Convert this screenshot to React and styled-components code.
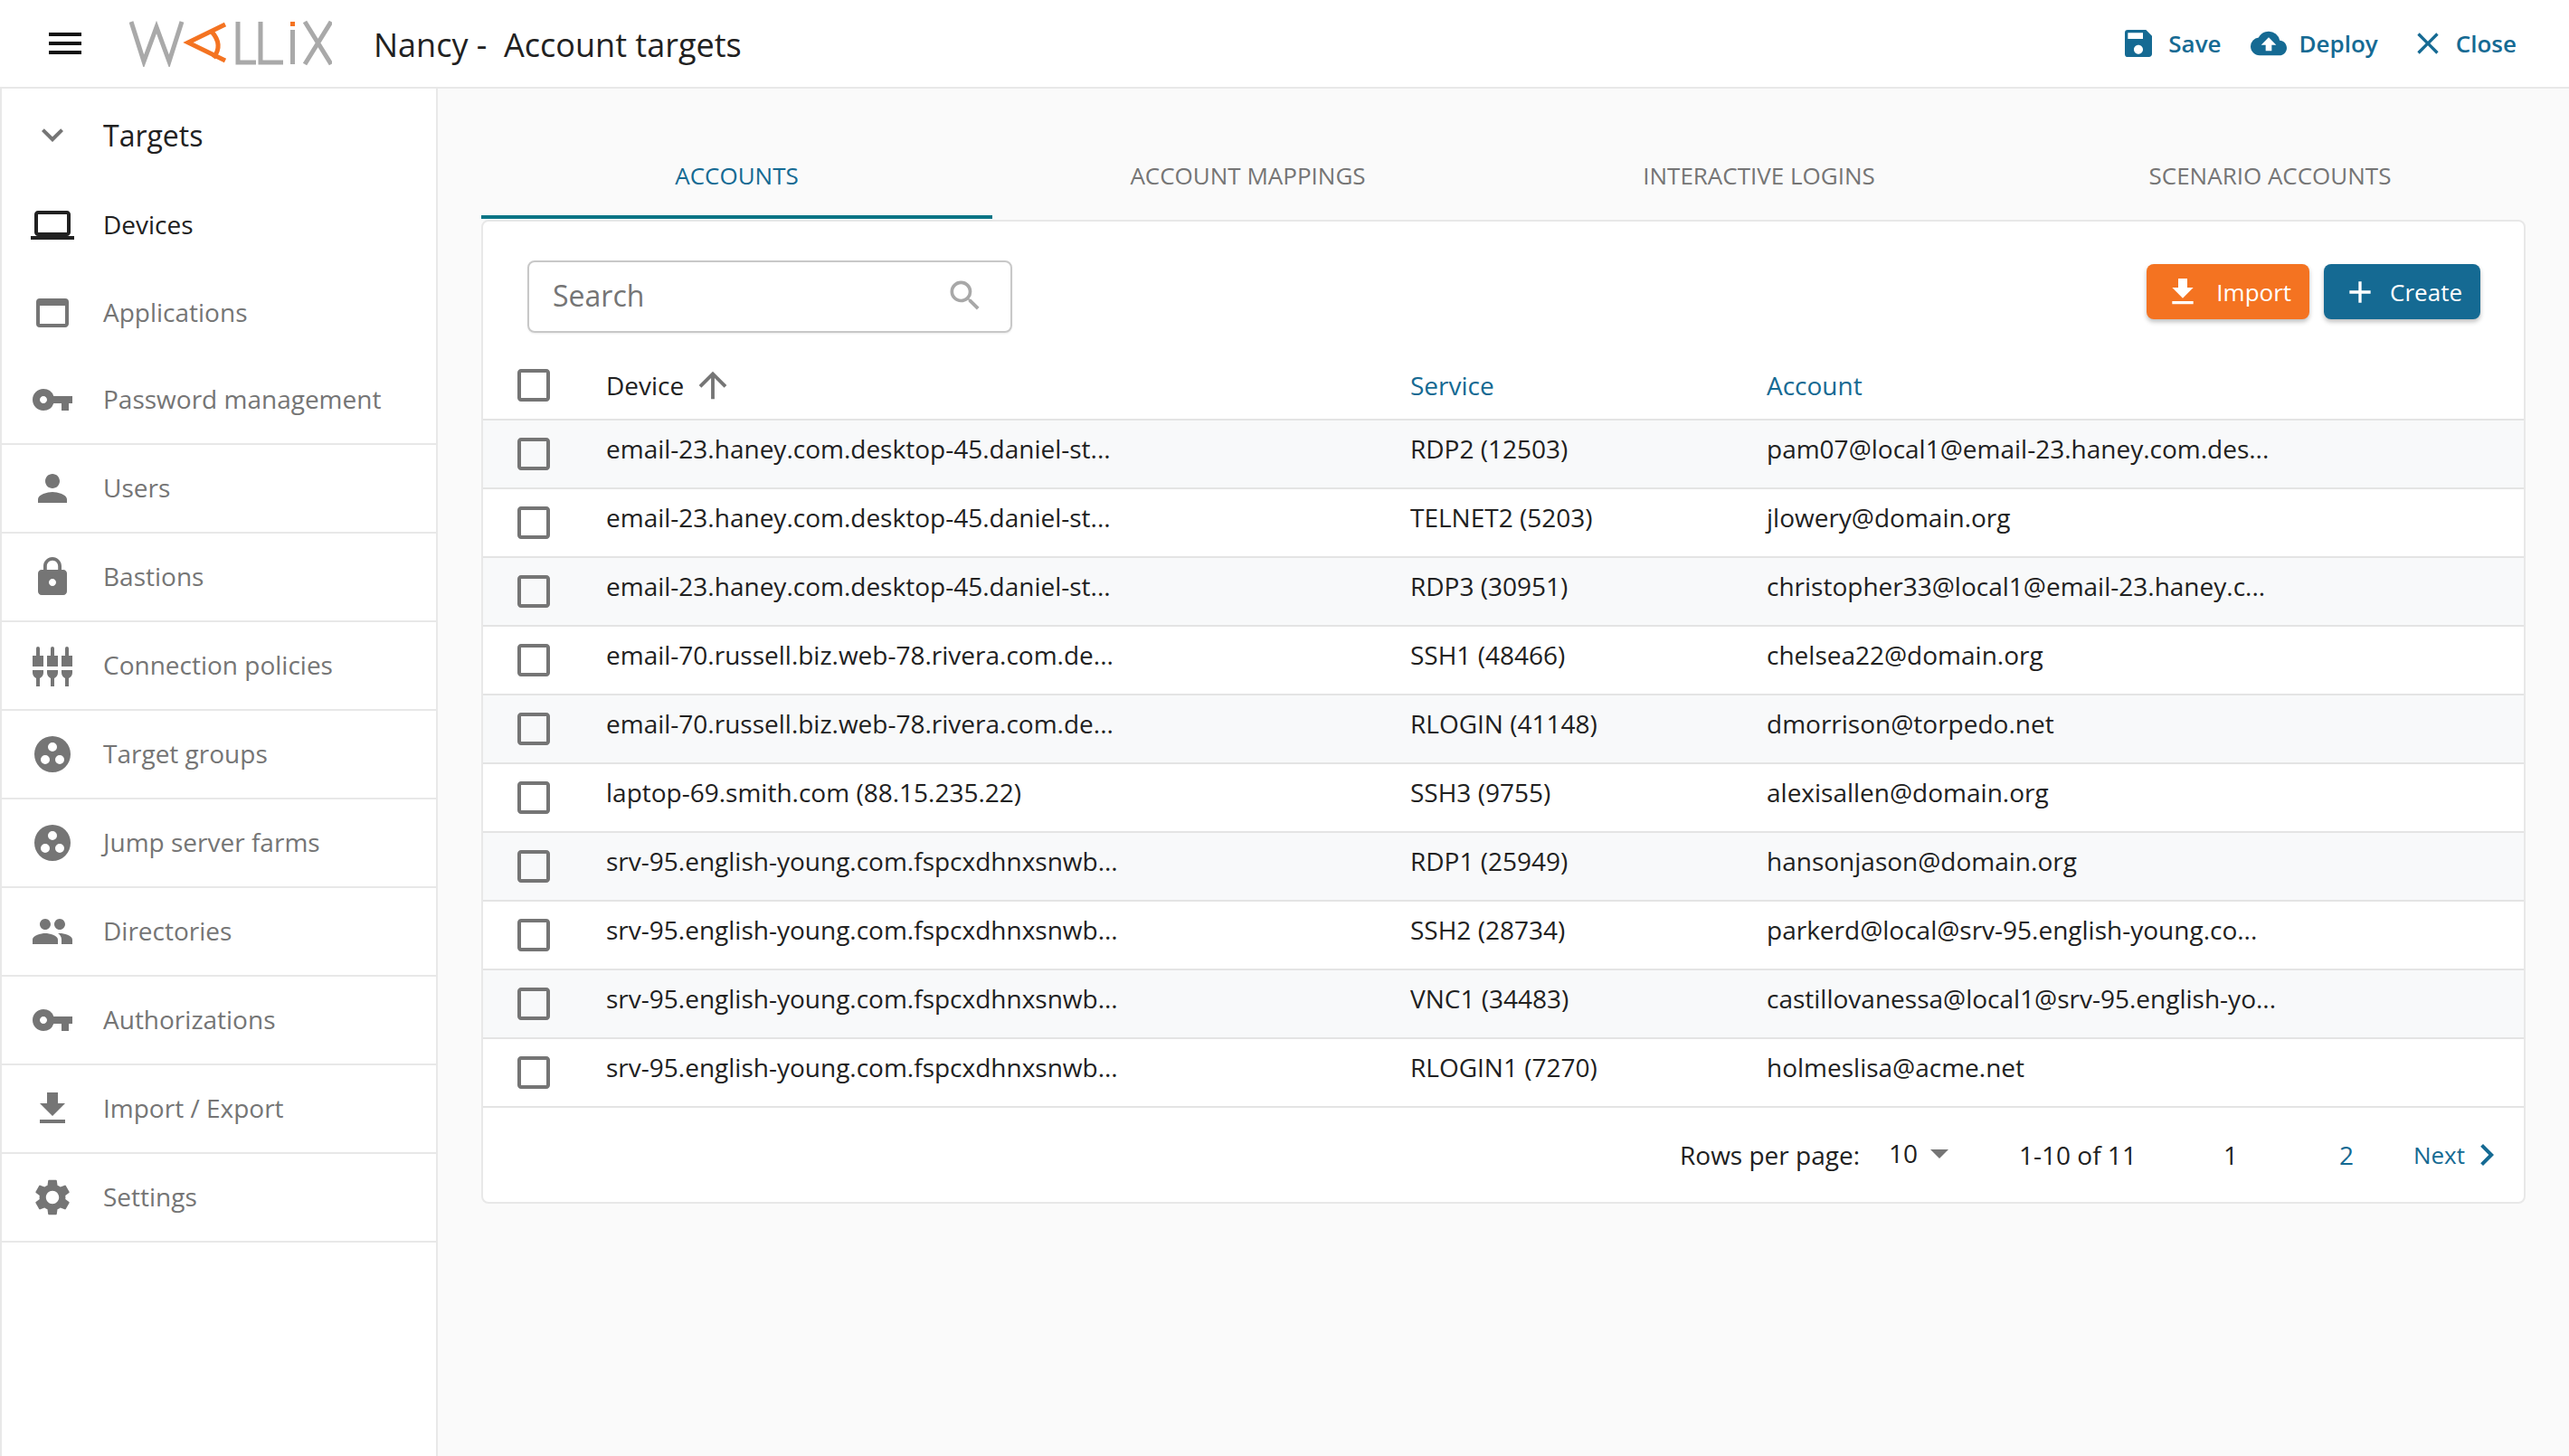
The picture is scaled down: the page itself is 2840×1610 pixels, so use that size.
import React from "react";
import styled, { createGlobalStyle } from "styled-components";
import {
  MdMenu, MdSave, MdCloudUpload, MdClose, MdExpandMore, MdLaptop, MdWebAsset, MdVpnKey, MdPerson, MdLock,
  MdPeople, MdFileDownload, MdSettings, MdSearch, MdAdd, MdCheckBoxOutlineBlank, MdArrowUpward, MdArrowDropDown, MdChevronRight,
} from "react-icons/md";

const Global = createGlobalStyle`
  html, body { margin: 0; padding: 0; background: #fafafa; }
  body { font-family: "Open Sans", "Noto Sans", sans-serif; color: #212121; }
  * { box-sizing: border-box; }
`;

const Page = styled.div`
  width: 2840px; height: 1610px; display: flex; flex-direction: column; overflow: hidden;
`;
const Header = styled.header`
  height: 98px; flex: none; display: flex; align-items: center; background: #fff;
  border-bottom: 2px solid #e8e8e8; padding: 0 58px 0 48px;
`;
const Burger = styled(MdMenu)` font-size: 48px; color: #111; flex: none; `;
const Logo = styled.svg` width: 224px; height: 52px; margin-left: 47px; flex: none; `;
const Title = styled.h1`
  margin: 0 0 0 46px; padding-top: 2px; font-size: 36px; font-weight: 400; color: #212121; white-space: pre; flex: 1;
`;
const Actions = styled.div` display: flex; align-items: center; `;
const Action = styled.div`
  display: flex; align-items: center; margin-left: ${p => p.$ml}px; gap: ${p => p.$gap}px; color: #156a93; font-size: 26px; font-weight: 600;
  svg { font-size: 40px; }
`;
const Body = styled.div` flex: 1; display: flex; min-height: 0; `;
const Sidebar = styled.nav`
  width: 484px; flex: none; background: #fff; border-left: 2px solid #e8e8e8; border-right: 2px solid #e8e8e8;
`;
const SideHead = styled.div`
  height: 102px; display: flex; align-items: center; padding-left: 32px; font-size: 32px; color: #212121;
  svg { font-size: 48px; color: #757575; margin-right: 32px; }
`;
const SideGroup = styled.div`
  border-bottom: 2px solid #e8e8e8;
`;
const SideItem = styled.div`
  height: ${p => p.$h}px; display: flex; align-items: center; padding-left: 32px; gap: 32px; font-size: 28px;
  color: ${p => (p.$active ? "#212121" : "#757575")};
  border-bottom: ${p => (p.$line ? "2px solid #e8e8e8" : "none")};
  svg { font-size: 48px; flex: none; color: ${p => (p.$active ? "#212121" : "#757575")}; }
`;
const SideLabel = styled.span` padding-bottom: 2px; `;
const Main = styled.main` flex: 1; background: #fafafa; padding: 37px 48px 0 48px; min-width: 0; `;
const Tabs = styled.div` display: grid; grid-template-columns: repeat(4, 1fr); height: 107px; `;
const Tab = styled.div`
  display: flex; align-items: center; justify-content: center; font-size: 26px; padding-top: 14px;
  color: ${p => (p.$active ? "#156a93" : "#757575")};
  border-bottom: 4px solid ${p => (p.$active ? "#0a7485" : "transparent")};
`;
const Card = styled.section`
  background: #fff; border: 2px solid #e8e8e8; border-radius: 8px; height: 1088px; margin-top: 1px; overflow: hidden;
`;
const Toolbar = styled.div`
  height: 144px; display: flex; justify-content: space-between; align-items: flex-start; padding: 43px 48px 0 49px;
`;
const SearchBox = styled.div`
  width: 536px; height: 80px; border: 2px solid #c8c8c8; border-radius: 8px; display: flex; align-items: center;
  justify-content: space-between; padding: 0 28px 3px 26px; font-size: 32px; color: #757575;
  box-shadow: 0 1px 2px rgba(0,0,0,.08);
  svg { font-size: 44px; color: #a8a8a8; }
`;
const Buttons = styled.div` display: flex; gap: 16px; margin-top: 4px; `;
const Button = styled.button`
  height: 61px; border: none; border-radius: 8px; display: flex; align-items: center; gap: ${p => p.$gap}px; color: #fff;
  font: 400 26px "Open Sans", sans-serif; padding: 0 20px; background: ${p => p.$bg};
  box-shadow: 0 3px 5px rgba(0,0,0,.25);
  svg { font-size: 40px; }
`;
const Row = styled.div`
  height: ${p => p.$h}px; display: grid; grid-template-columns: 136px 889px 394px 1fr; align-items: center;
  border-bottom: 2px solid #e4e4e4; background: ${p => (p.$tint ? "#f8f9fa" : "#fff")};
`;
const HeadRow = styled(Row)` background: #fff; `;
const CheckCell = styled.div`
  padding-left: 32px; display: flex; svg { font-size: 48px; color: #757575; }
`;
const Cell = styled.div`
  font-size: 28px; color: ${p => (p.$blue ? "#156a93" : "#212121")}; white-space: nowrap; padding-bottom: ${p => (p.$head ? 0 : 13)}px;
  display: flex; align-items: center;
`;
const SortIcon = styled(MdArrowUpward)` font-size: 46px; color: #757575; margin-left: 9px; `;
const Footer = styled.div`
  height: 104px; display: flex; align-items: center; font-size: 28px; color: #212121; white-space: nowrap;
`;
const Rows = styled.span` margin-left: 1323px; `;
const PerPage = styled.span`
  margin-left: 32px; display: flex; align-items: center; padding-bottom: 4px;
  svg { font-size: 48px; color: #757575; }
`;
const Range = styled.span` margin-left: 64px; `;
const PageNum = styled.span`
  margin-left: ${p => p.$ml}px; color: ${p => (p.$link ? "#156a93" : "#212121")};
`;
const Next = styled.span`
  margin-left: 66px; color: #156a93; display: flex; align-items: center; font-size: 26px;
  svg { font-size: 48px; }
`;

const PolicyIcon = () => (
  <svg viewBox="0 0 48 48" width="48" height="48" fill="currentColor">
    {[8, 24, 40].map(c => (
      <g key={c}>
        <rect x={c - 2} y="3" width="4" height="12" rx="2" />
        <rect x={c - 6} y="13" width="12" height="12" />
        <path d={`M${c - 6} 29h12v3c0 3-2 5-4 6v9h-4V38c-2-1-4-3-4-6z`} />
      </g>
    ))}
  </svg>
);
const GroupIcon = () => (
  <svg viewBox="0 0 48 48" width="48" height="48" fill="currentColor" fillRule="evenodd">
    <path d="M24 4a20 20 0 1 0 0 40 20 20 0 0 0 0-40zM24 11a5 5 0 1 1 0 10 5 5 0 0 1 0-10zM16 25a5 5 0 1 1 0 10 5 5 0 0 1 0-10zM32 25a5 5 0 1 1 0 10 5 5 0 0 1 0-10z" />
  </svg>
);

const topItems = [
  { label: "Devices", icon: <MdLaptop />, active: true, h: 98 },
  { label: "Applications", icon: <MdWebAsset />, h: 96 },
  { label: "Password management", icon: <MdVpnKey />, h: 96 },
];
const items = [
  ["Users", <MdPerson />], ["Bastions", <MdLock />], ["Connection policies", <PolicyIcon />],
  ["Target groups", <GroupIcon />], ["Jump server farms", <GroupIcon />], ["Directories", <MdPeople />],
  ["Authorizations", <MdVpnKey />], ["Import / Export", <MdFileDownload />], ["Settings", <MdSettings />],
];
const rows = [
  ["email-23.haney.com.desktop-45.daniel-st...", "RDP2 (12503)", "pam07@local1@email-23.haney.com.des..."],
  ["email-23.haney.com.desktop-45.daniel-st...", "TELNET2 (5203)", "jlowery@domain.org"],
  ["email-23.haney.com.desktop-45.daniel-st...", "RDP3 (30951)", "christopher33@local1@email-23.haney.c..."],
  ["email-70.russell.biz.web-78.rivera.com.de...", "SSH1 (48466)", "chelsea22@domain.org"],
  ["email-70.russell.biz.web-78.rivera.com.de...", "RLOGIN (41148)", "dmorrison@torpedo.net"],
  ["laptop-69.smith.com (88.15.235.22)", "SSH3 (9755)", "alexisallen@domain.org"],
  ["srv-95.english-young.com.fspcxdhnxsnwb...", "RDP1 (25949)", "hansonjason@domain.org"],
  ["srv-95.english-young.com.fspcxdhnxsnwb...", "SSH2 (28734)", "parkerd@local@srv-95.english-young.co..."],
  ["srv-95.english-young.com.fspcxdhnxsnwb...", "VNC1 (34483)", "castillovanessa@local1@srv-95.english-yo..."],
  ["srv-95.english-young.com.fspcxdhnxsnwb...", "RLOGIN1 (7270)", "holmeslisa@acme.net"],
];
const tabs = ["ACCOUNTS", "ACCOUNT MAPPINGS", "INTERACTIVE LOGINS", "SCENARIO ACCOUNTS"];

export default function App() {
  return (
    <Page>
      <Global />
      <Header>
        <Burger />
        <Logo viewBox="0 0 224 52" fill="none" aria-label="WALLIX">
          <polyline points="2,2 16,46 30,8 44,46 58,2" stroke="#a9a9a9" strokeWidth="5" />
          <path d="M106 5L65 25l41 20" stroke="#f47321" strokeWidth="5" />
          <path d="M91 13c9 10 9 20 2 29" stroke="#f47321" strokeWidth="5" />
          <polyline points="120,2 120,47 140,47" stroke="#a9a9a9" strokeWidth="5" />
          <polyline points="145,2 145,47 170,47" stroke="#a9a9a9" strokeWidth="5" />
          <rect x="178" y="2" width="5" height="5" fill="#f47321" />
          <rect x="178" y="11" width="5" height="38" fill="#a9a9a9" />
          <path d="M194 2l29 47M223 2l-29 47" stroke="#a9a9a9" strokeWidth="5" />
        </Logo>
        <Title>Nancy -  Account targets</Title>
        <Actions>
          <Action $ml={0} $gap={13}><MdSave />Save</Action>
          <Action $ml={32} $gap={14}><MdCloudUpload />Deploy</Action>
          <Action $ml={35} $gap={11}><MdClose />Close</Action>
        </Actions>
      </Header>
      <Body>
        <Sidebar>
          <SideHead><MdExpandMore />Targets</SideHead>
          <SideGroup>
            {topItems.map(i => (
              <SideItem key={i.label} $h={i.h} $active={i.active}>{i.icon}<SideLabel>{i.label}</SideLabel></SideItem>
            ))}
          </SideGroup>
          {items.map(([label, icon]) => (
            <SideItem key={label} $h={98} $line>{icon}<SideLabel>{label}</SideLabel></SideItem>
          ))}
        </Sidebar>
        <Main>
          <Tabs>
            {tabs.map((t, i) => <Tab key={t} $active={i === 0}>{t}</Tab>)}
          </Tabs>
          <Card>
            <Toolbar>
              <SearchBox>Search<MdSearch /></SearchBox>
              <Buttons>
                <Button $bg="#f47321" $gap={17}><MdFileDownload />Import</Button>
                <Button $bg="#156a93" $gap={13}><MdAdd />Create</Button>
              </Buttons>
            </Toolbar>
            <HeadRow $h={76}>
              <CheckCell><MdCheckBoxOutlineBlank /></CheckCell>
              <Cell $head>Device<SortIcon /></Cell>
              <Cell $head $blue>Service</Cell>
              <Cell $head $blue>Account</Cell>
            </HeadRow>
            {rows.map((r, i) => (
              <Row key={i} $h={76} $tint={i % 2 === 0}>
                <CheckCell><MdCheckBoxOutlineBlank /></CheckCell>
                <Cell>{r[0]}</Cell>
                <Cell>{r[1]}</Cell>
                <Cell>{r[2]}</Cell>
              </Row>
            ))}
            <Footer>
              <Rows>Rows per page:</Rows>
              <PerPage>10<MdArrowDropDown /></PerPage>
              <Range>1-10 of 11</Range>
              <PageNum $ml={96}>1</PageNum>
              <PageNum $ml={112} $link>2</PageNum>
              <Next>Next<MdChevronRight /></Next>
            </Footer>
          </Card>
        </Main>
      </Body>
    </Page>
  );
}
